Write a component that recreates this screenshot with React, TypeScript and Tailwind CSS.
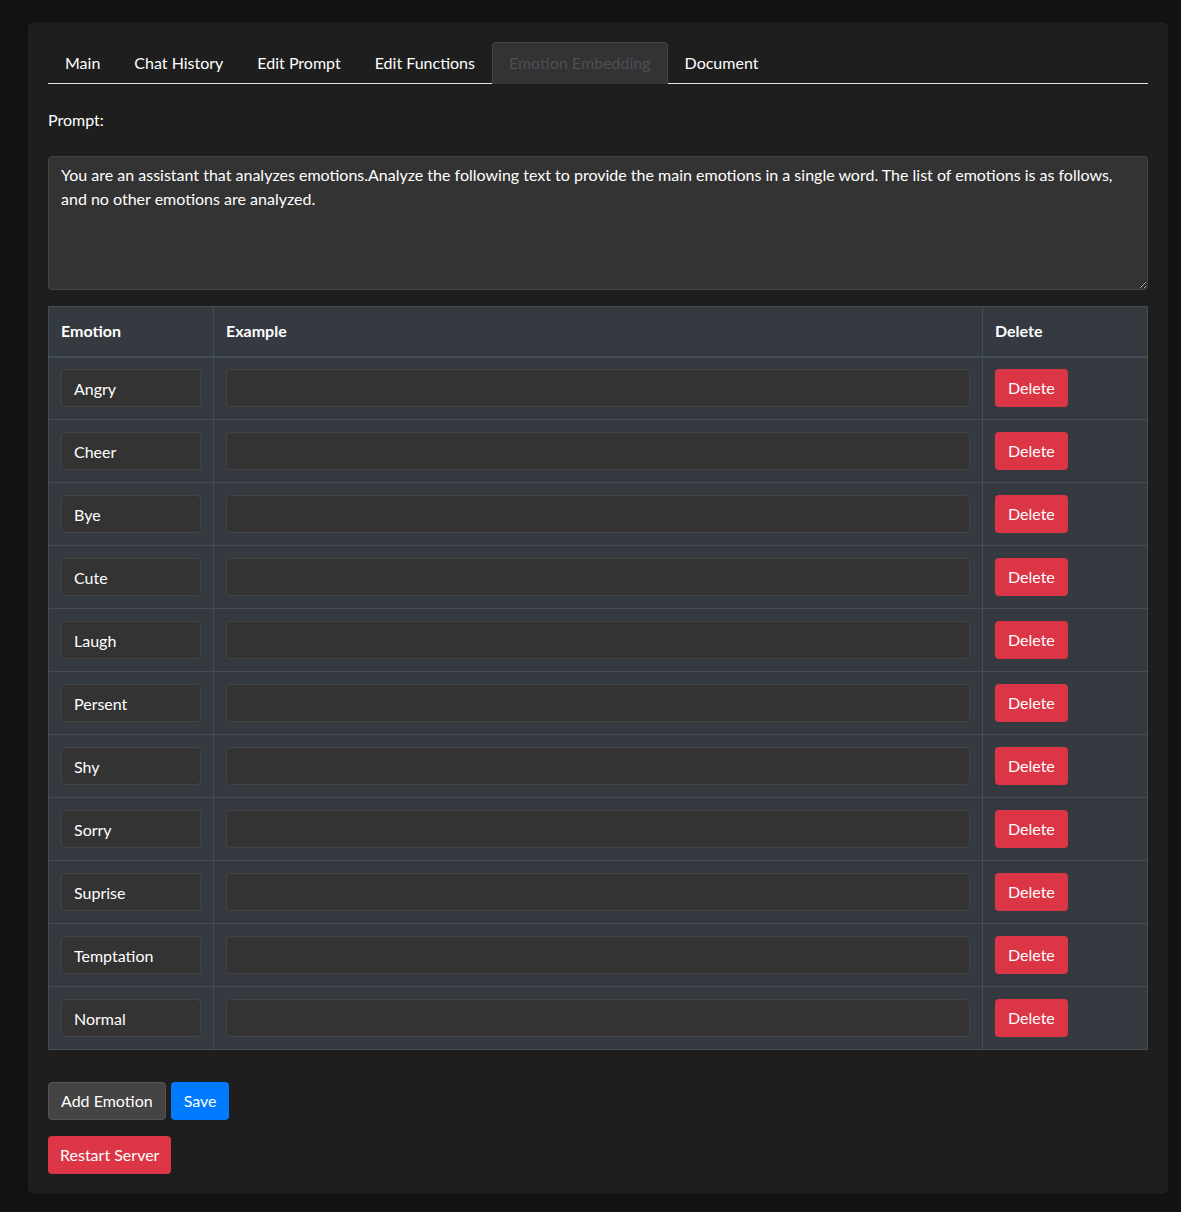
import { useState } from "react";

const tabs = [
  "Main",
  "Chat History",
  "Edit Prompt",
  "Edit Functions",
  "Emotion Embedding",
  "Document",
];

const initialEmotions = [
  "Angry",
  "Cheer",
  "Bye",
  "Cute",
  "Laugh",
  "Persent",
  "Shy",
  "Sorry",
  "Suprise",
  "Temptation",
  "Normal",
];

export default function App() {
  const [active] = useState("Emotion Embedding");
  const [emotions, setEmotions] = useState(initialEmotions);
  const [prompt, setPrompt] = useState(
    "You are an assistant that analyzes emotions.Analyze the following text to provide the main emotions in a single word. The list of emotions is as follows, and no other emotions are analyzed."
  );

  return (
    <div className="min-h-[1212px] bg-[#121212] pl-[28px] pt-[22px] pb-[18px] text-white font-['Lato','Open_Sans',sans-serif] text-base">
      <div className="w-[1140px] rounded-md bg-[#1e1e1e] p-5">
        {/* Tabs */}
        <ul className="flex border-b border-[#dee2e6]">
          {tabs.map((tab) => (
            <li key={tab} className="-mb-px">
              <button
                className={`h-[42px] px-4 leading-6 rounded-t border ${
                  tab === active
                    ? "bg-[#333333] border-[#444444] border-b-[#333333] text-[#495057]"
                    : "border-transparent text-white"
                }`}
              >
                {tab}
              </button>
            </li>
          ))}
        </ul>

        <label className="block mt-6 mb-6 leading-6">Prompt:</label>
        <textarea
          className="block w-full h-[134px] rounded bg-[#333333] border border-[#444444] px-3 py-1.5 leading-6 text-white outline-none"
          value={prompt}
          onChange={(e) => setPrompt(e.target.value)}
        />

        {/* Emotion table */}
        <table className="w-full mt-4 border-collapse bg-[#343a40] table-fixed">
          <thead>
            <tr>
              <th className="w-[165px] h-[50px] px-3 text-left font-bold border border-[#454d55] border-b-2">
                Emotion
              </th>
              <th className="px-3 text-left font-bold border border-[#454d55] border-b-2">
                Example
              </th>
              <th className="w-[165px] px-3 text-left font-bold border border-[#454d55] border-b-2">
                Delete
              </th>
            </tr>
          </thead>
          <tbody>
            {emotions.map((emotion, i) => (
              <tr key={emotion + i}>
                <td className="h-[63px] px-3 border border-[#454d55]">
                  <input
                    className="w-full h-[38px] rounded bg-[#333333] border border-[#444444] px-3 text-white outline-none"
                    defaultValue={emotion}
                  />
                </td>
                <td className="px-3 border border-[#454d55]">
                  <input className="w-full h-[38px] rounded bg-[#333333] border border-[#444444] px-3 text-white outline-none" />
                </td>
                <td className="px-3 border border-[#454d55]">
                  <button
                    className="h-[38px] px-[13px] rounded bg-[#dc3545] text-white"
                    onClick={() =>
                      setEmotions(emotions.filter((_, j) => j !== i))
                    }
                  >
                    Delete
                  </button>
                </td>
              </tr>
            ))}
          </tbody>
        </table>

        {/* Actions */}
        <div className="mt-8 flex gap-[5px]">
          <button
            className="h-[38px] px-3 rounded bg-[#444444] border border-[#555555] text-white"
            onClick={() => setEmotions([...emotions, ""])}
          >
            Add Emotion
          </button>
          <button className="h-[38px] px-[13px] rounded bg-[#007bff] text-white">
            Save
          </button>
        </div>
        <button className="mt-4 h-[38px] px-3 rounded bg-[#dc3545] text-white">
          Restart Server
        </button>
      </div>
    </div>
  );
}
